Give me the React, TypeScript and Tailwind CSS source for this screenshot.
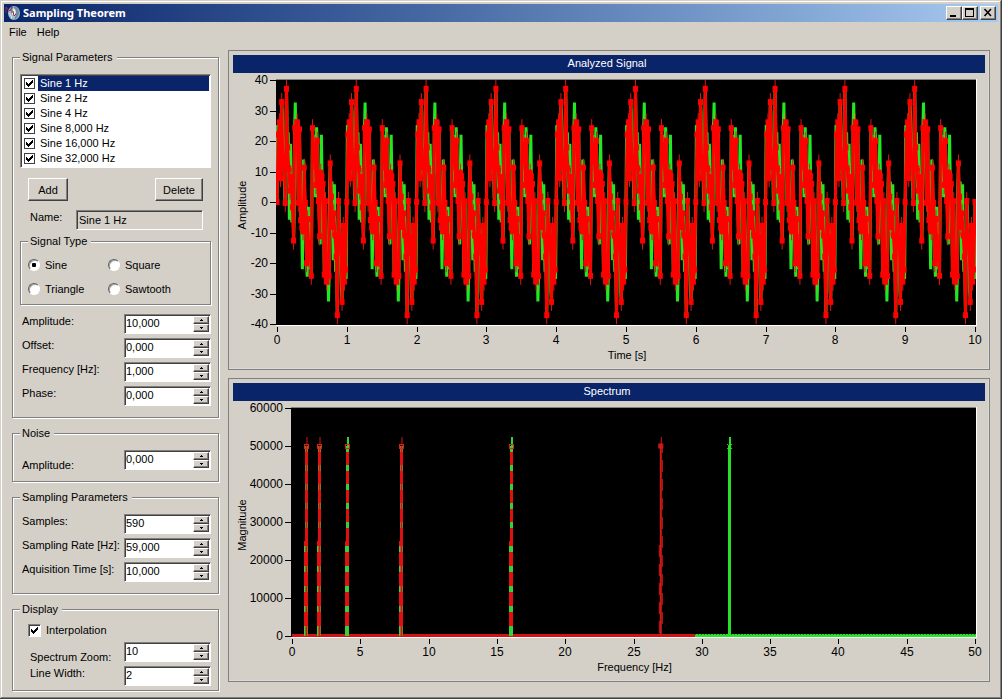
import { useState, type ReactNode } from 'react';
import clsx from 'clsx';

const SUNKEN =
  'border border-t-[#808080] border-l-[#808080] border-r-white border-b-white shadow-[inset_1px_1px_0_#404040]';
const RAISED =
  'bg-[#d4d0c8] border border-t-white border-l-white border-r-[#404040] border-b-[#404040] shadow-[inset_-1px_-1px_0_#808080]';

const COMPONENTS = [1, 2, 4, 8, 16, 32];
const SIGNALS = ['Sine 1 Hz', 'Sine 2 Hz', 'Sine 4 Hz', 'Sine 8,000 Hz', 'Sine 16,000 Hz', 'Sine 32,000 Hz'];

type Point = [number, number];

const signalAt = (t: number) => COMPONENTS.reduce((sum, f) => sum + 10 * Math.sin(2 * Math.PI * f * t), 0);

const sampleSignal = (rate: number): Point[] =>
  Array.from({ length: rate * 10 + 1 }, (_, i) => [i / rate, signalAt(i / rate)]);

const toPath = (points: Point[]) => points.map(([x, y], i) => `${i ? 'L' : 'M'}${x.toFixed(1)} ${y.toFixed(1)}`).join('');

const AppIcon = () => (
  <svg viewBox="0 0 16 16" className="h-4 w-4" aria-hidden="true">
    <ellipse cx="9" cy="8" rx="6" ry="7" fill="#9fb4c4" />
    <path d="M9 1Q14 3 14 8Q13 13 9 15L11 10L9 5Z" fill="#6b88a4" />
    <path d="M7 3L10 4L11 7L9 12L7 9Z" fill="#e6eef2" />
    <path d="M1 8V2L5 6L7 2V8M8 6L9 11L11 9" fill="none" stroke="#8a3048" strokeWidth="1" />
    <path d="M4 8L7 12L6 14" fill="none" stroke="#dfe8ee" strokeWidth="1" />
  </svg>
);

const TitleBar = () => (
  <header className="flex h-[18px] items-center bg-linear-to-r from-[#0a246a] to-[#a6caf0] pr-0.5 pl-px">
    <AppIcon />
    <h1 className="ml-0.5 grow font-['Noto_Sans','Liberation_Sans',sans-serif] text-[11px] leading-[18px] font-bold text-white">
      Sampling Theorem
    </h1>
    <button type="button" aria-label="Minimize" className={clsx(RAISED, 'h-[14px] w-4')}>
      <svg viewBox="0 0 14 12" className="h-3 w-3.5" shapeRendering="crispEdges">
        <path d="M3 8h6v2H3z" />
      </svg>
    </button>
    <button type="button" aria-label="Maximize" className={clsx(RAISED, 'h-[14px] w-4')}>
      <svg viewBox="0 0 14 12" className="h-3 w-3.5" shapeRendering="crispEdges">
        <path d="M2 1h9v9H2zM3 3v6h7V3z" fillRule="evenodd" />
      </svg>
    </button>
    <button type="button" aria-label="Close" className={clsx(RAISED, 'ml-0.5 h-[14px] w-4')}>
      <svg viewBox="0 0 14 12" className="h-3 w-3.5">
        <path d="M3.5 2L10 9M10 2L3.5 9" stroke="#000" strokeWidth="1.6" />
      </svg>
    </button>
  </header>
);

const Group = ({ title, className, children }: { title: string; className?: string; children: ReactNode }) => (
  <fieldset
    className={clsx('min-w-0 border border-[#808080] shadow-[1px_1px_0_#fff,inset_1px_1px_0_#fff]', className)}
  >
    <legend className="bg-[#d4d0c8] pr-1 pl-0.5 leading-[14px]">{title}</legend>
    {children}
  </fieldset>
);

const CheckBox = ({ id, flat }: { id: string; flat?: boolean }) => (
  <span className="grid place-items-center">
    <input
      id={id}
      type="checkbox"
      defaultChecked
      className={clsx(
        'peer appearance-none bg-white [grid-area:1/1]',
        flat ? 'h-[11px] w-[11px] border border-[#404040]' : clsx(SUNKEN, 'h-[13px] w-[13px]'),
      )}
    />
    <svg
      viewBox="0 0 7 7"
      className="pointer-events-none invisible h-[7px] w-[7px] [grid-area:1/1] peer-checked:visible"
      shapeRendering="crispEdges"
    >
      <path d="M0 2h1v1h1v1h1v-1h1v-1h1v-1h1v-1h1v3h-1v1h-1v1h-1v1h-1v1h-1v-1h-1v-1h-1z" />
    </svg>
  </span>
);

const Radio = ({ label, checked }: { label: string; checked?: boolean }) => (
  <label className="flex h-6 items-center gap-[5px]">
    <input
      type="radio"
      name="signal-type"
      defaultChecked={checked}
      className="h-3 w-3 appearance-none rounded-full border border-t-[#606060] border-r-white border-b-white border-l-[#606060] bg-white shadow-[inset_1px_1px_0_#a0a0a0] checked:bg-[radial-gradient(circle,#000_0_2px,transparent_2.5px)]"
    />
    {label}
  </label>
);

const Spin = ({ id, initial }: { id: string; initial: string }) => {
  const [value, setValue] = useState(initial);
  const step = (delta: number) => {
    const digits = value.split(',')[1]?.length ?? 0;
    setValue((parseFloat(value.replace(',', '.')) + delta).toFixed(digits).replace('.', ','));
  };

  return (
    <span className={clsx(SUNKEN, 'flex h-5 w-[87px] shrink-0 bg-white p-px')}>
      <input
        id={id}
        value={value}
        onChange={(e) => setValue(e.target.value)}
        className="h-[15px] w-0 grow bg-transparent leading-[15px] outline-none"
      />
      <span className="flex w-4 flex-col">
        <button type="button" aria-label="Increase" onClick={() => step(1)} className={clsx(RAISED, 'flex h-2 items-center justify-center')}>
          <svg viewBox="0 0 3 2" className="h-0.5 w-[3px]" shapeRendering="crispEdges">
            <path d="M1 0h1v1h1v1H0V1h1z" />
          </svg>
        </button>
        <button type="button" aria-label="Decrease" onClick={() => step(-1)} className={clsx(RAISED, 'flex h-2 items-center justify-center')}>
          <svg viewBox="0 0 3 2" className="h-0.5 w-[3px]" shapeRendering="crispEdges">
            <path d="M0 0h3v1H2v1H1V1H0z" />
          </svg>
        </button>
      </span>
    </span>
  );
};

const SpinRow = ({ id, label, value, labelClass }: { id: string; label: string; value: string; labelClass?: string }) => (
  <div className="flex h-6 items-start justify-between">
    <label htmlFor={id} className={clsx('leading-[14px] whitespace-nowrap', labelClass ?? 'ml-0.5')}>
      {label}
    </label>
    <Spin id={id} initial={value} />
  </div>
);

const Sidebar = () => {
  const [selected, setSelected] = useState(0);

  return (
    <form className="flex w-[207px] shrink-0 flex-col gap-2">
      <Group title="Signal Parameters" className="px-[7px] pb-[7px]">
        <ul className={clsx(SUNKEN, 'mt-[10px] bg-white p-px')}>
          {SIGNALS.map((name, i) => (
            <li key={name} className="flex h-[15px] items-center gap-[3px] pl-0.5" onClick={() => setSelected(i)}>
              <CheckBox id={`signal-${i}`} flat />
              <label
                htmlFor={`signal-${i}`}
                className={clsx('grow pl-0.5 leading-[15px]', i === selected && 'bg-[#0a246a] text-white')}
              >
                {name}
              </label>
            </li>
          ))}
        </ul>

        <div className="mx-2 mt-[10px] flex justify-between">
          <button type="button" className={clsx(RAISED, 'h-[23px] w-10')}>
            Add
          </button>
          <button type="button" className={clsx(RAISED, 'h-[23px] w-12')}>
            Delete
          </button>
        </div>

        <div className="mt-[9px] mr-2 ml-[10px] flex items-start justify-between">
          <label htmlFor="name" className="leading-[14px]">
            Name:
          </label>
          <input id="name" readOnly value={SIGNALS[selected]} className={clsx(SUNKEN, 'h-5 w-[127px] pl-0.5')} />
        </div>

        <Group title="Signal Type" className="mt-1 px-[7px] pb-[3px]">
          <div className="mt-[5px] grid grid-cols-[80px_1fr]">
            <Radio label="Sine" checked />
            <Radio label="Square" />
            <Radio label="Triangle" />
            <Radio label="Sawtooth" />
          </div>
        </Group>

        <div className="mt-[9px]">
          <SpinRow id="amplitude" label="Amplitude:" value="10,000" />
          <SpinRow id="offset" label="Offset:" value="0,000" />
          <SpinRow id="frequency" label="Frequency [Hz]:" value="1,000" />
          <SpinRow id="phase" label="Phase:" value="0,000" />
        </div>
      </Group>

      <Group title="Noise" className="px-[7px] pb-[7px]">
        <div className="mt-[10px]">
          <SpinRow id="noise" label="Amplitude:" value="0,000" labelClass="ml-0.5 pt-2" />
        </div>
      </Group>

      <Group title="Sampling Parameters" className="px-[7px] pb-[7px]">
        <div className="mt-[10px]">
          <SpinRow id="samples" label="Samples:" value="590" />
          <SpinRow id="rate" label="Sampling Rate [Hz]:" value="59,000" />
          <SpinRow id="time" label="Aquisition Time [s]:" value="10,000" />
        </div>
      </Group>

      <Group title="Display" className="px-[7px]">
        <div className="mt-[7px] mb-[5px] ml-2 flex h-[14px] items-center gap-[5px]">
          <CheckBox id="interpolation" />
          <label htmlFor="interpolation">Interpolation</label>
        </div>
        <SpinRow id="zoom" label="Spectrum Zoom:" value="10" labelClass="ml-[10px] pt-2" />
        <SpinRow id="line-width" label="Line Width:" value="2" labelClass="ml-[10px]" />
      </Group>
    </form>
  );
};

const ChartPanel = ({ title, children }: { title: string; children: ReactNode }) => (
  <section className="border border-[#808080] px-1 pt-1 shadow-[inset_-1px_-1px_0_#dcdad5]">
    <h2 className="h-[18px] bg-[#0a246a] pr-1 text-center leading-[17px] text-white">{title}</h2>
    {children}
  </section>
);

type AxesProps = {
  left: number;
  right: number;
  top: number;
  bottom: number;
  xTicks: number[];
  yTicks: number[];
  xTitle: string;
  yTitle: string;
};

const Axes = ({ left, right, top, bottom, xTicks, yTicks, xTitle, yTitle }: AxesProps) => {
  const yMid = (top + bottom) / 2;

  return (
    <g fontSize="12" fill="#000">
      {xTicks.map((tick, i) => {
        const x = Math.round(left + ((right - left) * i) / (xTicks.length - 1));
        return (
          <g key={tick}>
            <rect x={x} y={bottom + 3} width="1" height="5" />
            <text x={x} y={bottom + 20} textAnchor="middle">
              {tick}
            </text>
          </g>
        );
      })}
      {yTicks.map((tick, i) => {
        const y = Math.round(top + ((bottom - top) * i) / (yTicks.length - 1));
        return (
          <g key={tick}>
            <rect x={left - 7} y={y} width="6" height="1" />
            <text x={left - 9} y={y + 4} textAnchor="end">
              {tick}
            </text>
          </g>
        );
      })}
      <text x={(left + right) / 2 + 1} y={bottom + 35} textAnchor="middle" fontSize="11">
        {xTitle}
      </text>
      <text transform={`translate(13 ${yMid + 3}) rotate(-90)`} textAnchor="middle" fontSize="11">
        {yTitle}
      </text>
    </g>
  );
};

const Frame = ({ left, right, top, bottom }: { left: number; right: number; top: number; bottom: number }) => (
  <g shapeRendering="crispEdges">
    <rect x={left - 1} y={top - 1} width={right - left + 3} height={bottom - top + 3} fill="#fff" />
    <rect x={left - 1} y={top - 1} width={right - left + 2} height="1" fill="#808080" />
    <rect x={left - 1} y={top} width={right - left + 2} height={bottom - top + 1} fill="#000" />
  </g>
);

const SignalChart = () => {
  const box = { left: 44, right: 742, top: 7, bottom: 251 };
  const scale = ([t, v]: Point): Point => [
    box.left + ((box.right - box.left) * t) / 10,
    box.top + ((40 - v) / 80) * (box.bottom - box.top),
  ];
  const original = sampleSignal(118).map(scale);
  const sampled = sampleSignal(59).map(scale);
  // Short tails past each local extreme
  const spikes = sampled.flatMap(([x, y], i) => {
    if (i === 0 || i === sampled.length - 1) return [];
    const before = y - sampled[i - 1][1];
    const after = y - sampled[i + 1][1];
    if (before * after <= 0) return [];
    return [`M${x} ${y}V${y + (before > 0 ? 9 : -9)}`];
  });

  return (
    <svg viewBox="0 0 752 296" className="block h-auto w-full" role="img" aria-label="Analyzed signal over time">
      <Frame {...box} />
      <clipPath id="signal-area">
        <rect x={box.left - 1} y={box.top} width={box.right - box.left + 2} height={box.bottom - box.top + 1} />
      </clipPath>
      <g clipPath="url(#signal-area)" fill="none">
        <path d={toPath(original)} stroke="#22e822" strokeWidth="3" strokeLinejoin="bevel" />
        <path d={toPath(sampled)} stroke="#f00" strokeWidth="3" strokeLinejoin="bevel" />
        <path d={spikes.join('')} stroke="#e01414" strokeWidth="1" />
        {sampled.map(([x, y], i) => (
          <rect key={i} x={x - 2.5} y={y - 3} width="5" height="6" fill="#f00" />
        ))}
      </g>
      <Axes
        {...box}
        xTicks={[0, 1, 2, 3, 4, 5, 6, 7, 8, 9, 10]}
        yTicks={[40, 30, 20, 10, 0, -10, -20, -30, -40]}
        xTitle="Time [s]"
        yTitle="Amplitude"
      />
    </svg>
  );
};

const SpectrumChart = () => {
  const box = { left: 59, right: 742, top: 7, bottom: 235 };
  const xAt = (f: number) => box.left + ((box.right - box.left) * f) / 50;
  const peakY = box.top + (box.bottom - box.top) / 6;
  const base = box.bottom;
  const halfY = (peakY + base) / 2;

  return (
    <svg viewBox="0 0 752 280" className="block h-auto w-full" role="img" aria-label="Magnitude spectrum">
      <Frame {...box} />
      <rect x={box.left} y={base - 2} width={xAt(29.5) - box.left} height="3" fill="#d01414" />
      <rect x={xAt(29.5)} y={base - 2} width={box.right - xAt(29.5) + 1} height="3" fill="#2ce02c" />
      <path d={`M${xAt(29.5)} ${base - 1.5}H${box.right}`} stroke="#128012" strokeWidth="1" strokeDasharray="1 2" />
      {[1, 2, 4, 8, 16].map((f) => {
        const x = Math.round(xAt(f)) + 0.5;
        const greenTip = f === 4 || f === 16;
        return (
          <g key={f} fill="none">
            <path d={`M${x - 0.5} ${base}V${halfY}`} stroke="#38d038" strokeWidth="4" />
            <path d={`M${x} ${halfY}V${peakY}`} stroke="#38d038" strokeWidth="3" />
            <path d={`M${x - 0.5} ${base - 10}V${halfY}`} stroke="#e01010" strokeWidth="4" strokeDasharray="14 6" />
            <path d={`M${x} ${halfY}V${peakY}`} stroke="#e01010" strokeWidth="3" strokeDasharray="13 6" />
            {!greenTip && <path d={`M${x} ${base}V${peakY}`} stroke="#e01010" strokeWidth="2" />}
            <path
              d={`M${x + 0.5} ${peakY}v-9`}
              stroke={greenTip ? '#38d038' : '#e01010'}
              strokeWidth={greenTip ? 2 : 1}
            />
            <rect x={x - 2} y={peakY - 1.5} width="4" height="4" stroke="#d02818" />
          </g>
        );
      })}
      <g fill="none" stroke="#d01818">
        <path d={`M${xAt(27)} ${base}V${peakY}`} strokeWidth="2" />
        <path d={`M${xAt(27) - 1.5} ${base - 3}V${halfY}`} strokeWidth="1" strokeDasharray="12 7" />
        <path d={`M${xAt(27) + 1.5} ${base - 12}V${peakY}`} strokeWidth="1" strokeDasharray="12 7" />
        <path d={`M${xAt(27) + 0.5} ${peakY}v-9`} strokeWidth="1" />
        <rect x={xAt(27) - 2} y={peakY - 2} width="4" height="4" fill="#d01818" />
      </g>
      <g fill="none" stroke="#28e028">
        <path d={`M${Math.round(xAt(32)) + 0.5} ${base}V${peakY}`} strokeWidth="3" />
        <path d={`M${Math.round(xAt(32)) + 1} ${peakY}v-9`} strokeWidth="2" />
        <path d={`M${xAt(32) - 2} ${peakY - 2}l5 5m0 -5l-5 5`} />
      </g>
      <Axes
        {...box}
        xTicks={[0, 5, 10, 15, 20, 25, 30, 35, 40, 45, 50]}
        yTicks={[60000, 50000, 40000, 30000, 20000, 10000, 0]}
        xTitle="Frequency [Hz]"
        yTitle="Magnitude"
      />
    </svg>
  );
};

export default function App() {
  return (
    <div className="min-h-screen bg-[#d4d0c8] p-1 font-['Liberation_Sans',Arial,sans-serif] text-[11px] leading-[14px] text-black shadow-[inset_-1px_-1px_0_#404040,inset_1px_1px_0_#d4d0c8,inset_-2px_-2px_0_#808080,inset_2px_2px_0_#fff]">
      <TitleBar />
      <nav className="flex h-5 items-center gap-[10px] pl-[5px]">
        <button type="button">File</button>
        <button type="button">Help</button>
      </nav>
      <div className="flex items-start gap-[9px] px-2 pt-2">
        <Sidebar />
        <main className="flex min-w-0 grow flex-col gap-2">
          <ChartPanel title="Analyzed Signal">
            <SignalChart />
          </ChartPanel>
          <ChartPanel title="Spectrum">
            <SpectrumChart />
          </ChartPanel>
        </main>
      </div>
    </div>
  );
}
